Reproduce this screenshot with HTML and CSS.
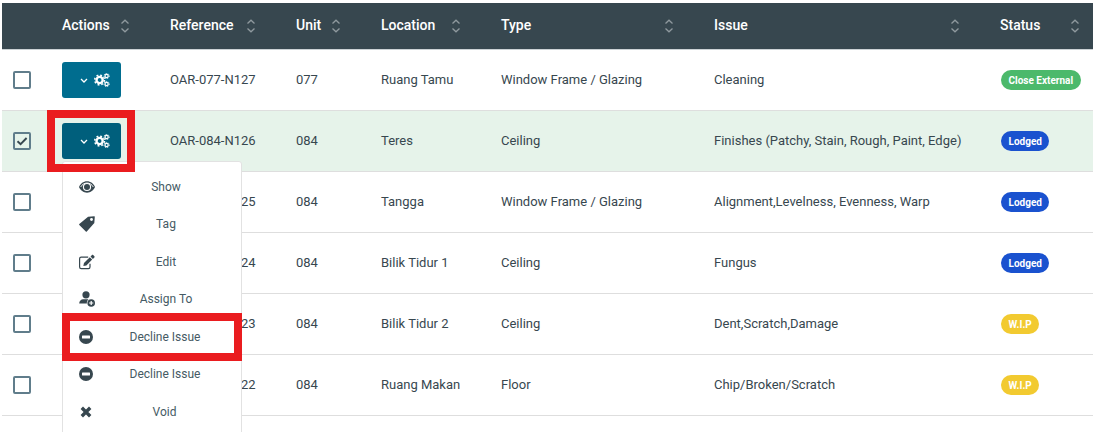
FILE: index.html
```html
<!DOCTYPE html>
<html lang="en">
<head>
<meta charset="utf-8">
<title>Issues</title>
<link rel="stylesheet" href="styles.css">
</head>
<body>
<svg class="defs" width="0" height="0" aria-hidden="true">
  <defs>
    <symbol id="sort" viewBox="0 0 10 14">
      <path d="M1.500 4.500 5 1.200l3.500 3.300M1.500 9.500 5 12.800l3.500-3.300" fill="none" stroke="currentColor" stroke-width="1.300"/>
    </symbol>
    <symbol id="gears" viewBox="0 0 16 14">
      <circle cx="5.600" cy="7" r="3.100" fill="none" stroke="currentColor" stroke-width="2.400"/>
      <circle cx="5.600" cy="7" r="4.900" fill="none" stroke="currentColor" stroke-width="1.500" stroke-dasharray="1.900 1.950"/>
      <circle cx="12.600" cy="3" r="1.600" fill="none" stroke="currentColor" stroke-width="1.200"/>
      <circle cx="12.600" cy="3" r="2.600" fill="none" stroke="currentColor" stroke-width="1" stroke-dasharray="1.100 1.100"/>
      <circle cx="12.600" cy="11" r="1.600" fill="none" stroke="currentColor" stroke-width="1.200"/>
      <circle cx="12.600" cy="11" r="2.600" fill="none" stroke="currentColor" stroke-width="1" stroke-dasharray="1.100 1.100"/>
    </symbol>
    <symbol id="minus" viewBox="0 0 14 14">
      <circle cx="7" cy="7" r="7" fill="currentColor"/>
      <rect x="3" y="5.600" width="8" height="2.800" rx=".5" fill="#fff"/>
    </symbol>
  </defs>
</svg>
<div class="page">
  <table class="grid">
    <colgroup>
      <col class="c-check"><col class="c-actions"><col class="c-ref"><col class="c-unit"><col class="c-loc"><col class="c-type"><col class="c-issue"><col class="c-status">
    </colgroup>
    <thead>
      <tr>
        <th></th>
        <th><div class="th"><span>Actions</span><svg class="sort"><use href="#sort"/></svg></div></th>
        <th><div class="th"><span>Reference</span><svg class="sort"><use href="#sort"/></svg></div></th>
        <th><div class="th"><span>Unit</span><svg class="sort"><use href="#sort"/></svg></div></th>
        <th><div class="th"><span>Location</span><svg class="sort"><use href="#sort"/></svg></div></th>
        <th><div class="th"><span>Type</span><svg class="sort"><use href="#sort"/></svg></div></th>
        <th><div class="th"><span>Issue</span><svg class="sort"><use href="#sort"/></svg></div></th>
        <th><div class="th"><span>Status</span><svg class="sort"><use href="#sort"/></svg></div></th>
      </tr>
    </thead>
    <tbody>
      <tr>
        <td><span class="check"></span></td>
        <td><button class="act"><svg class="chev" viewBox="0 0 8 5"><path d="M1 1l3 3 3-3" fill="none" stroke="currentColor" stroke-width="1.300"/></svg><svg class="gears"><use href="#gears"/></svg></button></td>
        <td>OAR-077-N127</td><td>077</td><td>Ruang Tamu</td><td>Window Frame / Glazing</td><td>Cleaning</td>
        <td><span class="badge green">Close External</span></td>
      </tr>
      <tr class="selected">
        <td><span class="check on"><svg viewBox="0 0 14 14"><path d="M2.500 7.200 5.600 10.200 11.600 4" fill="none" stroke="currentColor" stroke-width="1.900"/></svg></span></td>
        <td><button class="act dark"><svg class="chev" viewBox="0 0 8 5"><path d="M1 1l3 3 3-3" fill="none" stroke="currentColor" stroke-width="1.300"/></svg><svg class="gears"><use href="#gears"/></svg></button></td>
        <td>OAR-084-N126</td><td>084</td><td>Teres</td><td>Ceiling</td><td>Finishes (Patchy, Stain, Rough, Paint, Edge)</td>
        <td><span class="badge blue">Lodged</span></td>
      </tr>
      <tr>
        <td><span class="check"></span></td><td></td>
        <td>OAR-084-N125</td><td>084</td><td>Tangga</td><td>Window Frame / Glazing</td><td>Alignment,Levelness, Evenness, Warp</td>
        <td><span class="badge blue">Lodged</span></td>
      </tr>
      <tr>
        <td><span class="check"></span></td><td></td>
        <td>OAR-084-N124</td><td>084</td><td>Bilik Tidur 1</td><td>Ceiling</td><td>Fungus</td>
        <td><span class="badge blue">Lodged</span></td>
      </tr>
      <tr>
        <td><span class="check"></span></td><td></td>
        <td>OAR-084-N123</td><td>084</td><td>Bilik Tidur 2</td><td>Ceiling</td><td>Dent,Scratch,Damage</td>
        <td><span class="badge yellow">W.I.P</span></td>
      </tr>
      <tr>
        <td><span class="check"></span></td><td></td>
        <td>OAR-084-N122</td><td>084</td><td>Ruang Makan</td><td>Floor</td><td>Chip/Broken/Scratch</td>
        <td><span class="badge yellow">W.I.P</span></td>
      </tr>
    </tbody>
  </table>

  <ul class="menu">
    <li><svg class="ico" viewBox="0 0 16 12"><path d="M8 .3C4.400.3 1.400 2.600 0 6c1.400 3.400 4.400 5.700 8 5.700s6.600-2.300 8-5.700C14.600 2.600 11.600.3 8 .3z" fill="currentColor"/><circle cx="8" cy="6" r="4.100" fill="#fff"/><circle cx="8" cy="6" r="3" fill="currentColor"/><path d="M1.700 6c1.300-2.500 3.600-4 6.300-4s5 1.500 6.300 4" fill="none" stroke="#fff" stroke-width=".9"/></svg><span>Show</span></li>
    <li><svg class="ico" viewBox="0 0 16 16"><path d="M9.200.7 15.300.2c.3 0 .5.2.5.5l-.5 6.200c0 .2-.1.3-.2.4L7.800 15.600c-.3.3-.7.300-1 0L.3 9.100c-.3-.3-.3-.7 0-1L8.800.9c.1-.1.3-.2.400-.2z" fill="currentColor"/><circle cx="12.500" cy="3.500" r="1.400" fill="#fff"/></svg><span>Tag</span></li>
    <li><svg class="ico" viewBox="0 0 16 16"><path d="M11 9.800v3.200c0 .9-.7 1.600-1.600 1.600H2.200c-.9 0-1.600-.7-1.600-1.600V4.800c0-.9.7-1.600 1.600-1.600h7" fill="none" stroke="currentColor" stroke-width="1.200"/><path d="M5 9l-.7 3.100 3.100-.7 5.800-5.800-2.400-2.400z" fill="currentColor"/><path d="M11.500 2.500l2.400 2.400 1.500-1.500c.3-.3.300-.8 0-1.100l-1.300-1.300c-.3-.3-.8-.3-1.100 0z" fill="currentColor"/></svg><span>Edit</span></li>
    <li><svg class="ico" viewBox="0 0 16 16"><circle cx="7" cy="3.800" r="3.600" fill="currentColor"/><path d="M.2 12.600c0-2.600 2-4.300 3.900-4.300h3.800c.6 0 1.100.1 1.600.3-1.300 1-1.900 2.500-1.600 4z" fill="currentColor"/><circle cx="12.200" cy="12" r="3.800" fill="currentColor"/><path d="M12.200 9.900v4.200M10.100 12h4.200" stroke="#fff" stroke-width="1.200"/></svg><span>Assign To</span></li>
    <li><svg class="ico ico-minus"><use href="#minus"/></svg><span>Decline Issue</span></li>
    <li><svg class="ico ico-minus"><use href="#minus"/></svg><span>Decline Issue</span></li>
    <li><svg class="ico ico-x" viewBox="0 0 12 12"><path d="M1.800 1.800l8.400 8.400M10.200 1.800l-8.400 8.400" stroke="currentColor" stroke-width="3.400"/></svg><span>Void</span></li>
    <li></li>
  </ul>

  <div class="mark mark-btn"></div>
  <div class="mark mark-item"></div>
</div>
</body>
</html>
```
FILE: styles.css
```css
html, body {
  margin: 0;
  padding: 0;
  height: 432px;
  overflow: hidden;
  background: #fff;
}
body {
  font-family: Roboto, "Liberation Sans", sans-serif;
  color: #37474f;
}
.defs { position: absolute; }
.page {
  position: relative;
  height: 432px;
  overflow: hidden;
  padding: 3px 0 0 2px;
  box-sizing: border-box;
}
.grid {
  width: 1106px;
  table-layout: fixed;
  border-collapse: separate;
  border-spacing: 0;
  font-size: 13px;
}
.c-check { width: 48px; }
.c-actions { width: 108px; }
.c-ref { width: 126px; }
.c-unit { width: 85px; }
.c-loc { width: 120px; }
.c-type { width: 213px; }
.c-issue { width: 286px; }
.c-status { width: 120px; }

.grid th {
  padding: 0 0 2px 12px;
  box-sizing: content-box;
  background: #37474f;
  color: #fff;
  font-size: 14px;
  font-weight: 500;
  text-align: left;
  border-bottom: 1px solid #ccd2d5;
}
.grid thead th { height: 44px; }
.th {
  display: flex;
  align-items: center;
  justify-content: space-between;
  padding-right: 28px;
}
.sort {
  width: 10px;
  height: 14px;
  color: #8f999e;
  position: relative;
  top: 1px;
}
.grid td {
  height: 60px;
  padding: 0 0 0 12px;
  border-bottom: 1px solid #dedede;
  white-space: nowrap;
  vertical-align: middle;
  line-height: 18px;
}
.selected td { background: #e6f3ea; }

.check {
  display: block;
  box-sizing: border-box;
  width: 18px;
  height: 18px;
  margin-left: -1px;
  border: 2px solid #607d8b;
  border-radius: 2px;
  color: #37474f;
}
.check svg { display: block; width: 14px; height: 14px; }

.act {
  display: flex;
  align-items: center;
  justify-content: flex-end;
  gap: 6px;
  width: 59px;
  height: 36px;
  padding: 0 11px 0 0;
  border: 0;
  border-radius: 3px;
  background: #006d8f;
  color: #fff;
}
.act.dark { background: #005f7c; }
.chev { width: 8px; height: 5px; }
.gears { width: 16px; height: 14px; }

.badge {
  display: inline-block;
  box-sizing: border-box;
  height: 20px;
  padding: 1px 7.5px 0;
  border-radius: 10px;
  color: #fff;
  font-size: 10px;
  font-weight: 700;
  line-height: 20px;
  vertical-align: middle;
  position: relative;
  left: 1px;
}
.green { background: #4cb96b; }
.blue { background: #1a52cf; }
.yellow { background: #f2ca30; }

.menu {
  position: absolute;
  left: 62px;
  top: 161px;
  width: 180px;
  margin: 0;
  padding: 6px 4px 0 16px;
  box-sizing: border-box;
  list-style: none;
  background: #fff;
  border: 1px solid #e2e2e2;
  border-radius: 3px;
  font-size: 12px;
  color: #455a64;
}
.menu li {
  display: flex;
  align-items: center;
  height: 37.5px;
}
.menu span {
  flex: 1;
  text-align: center;
}
.ico {
  width: 16px;
  height: 16px;
  color: #37474f;
}
.ico.ico-minus { width: 14px; height: 14px; }
.ico.ico-x { width: 12px; height: 12px; margin-left: 1px; }

.mark {
  position: absolute;
  box-sizing: border-box;
  border: 8px solid #ea1c1f;
}
.mark-btn { left: 47px; top: 110px; width: 88px; height: 62px; }
.mark-item { left: 62px; top: 313px; width: 180px; height: 48px; }
```
